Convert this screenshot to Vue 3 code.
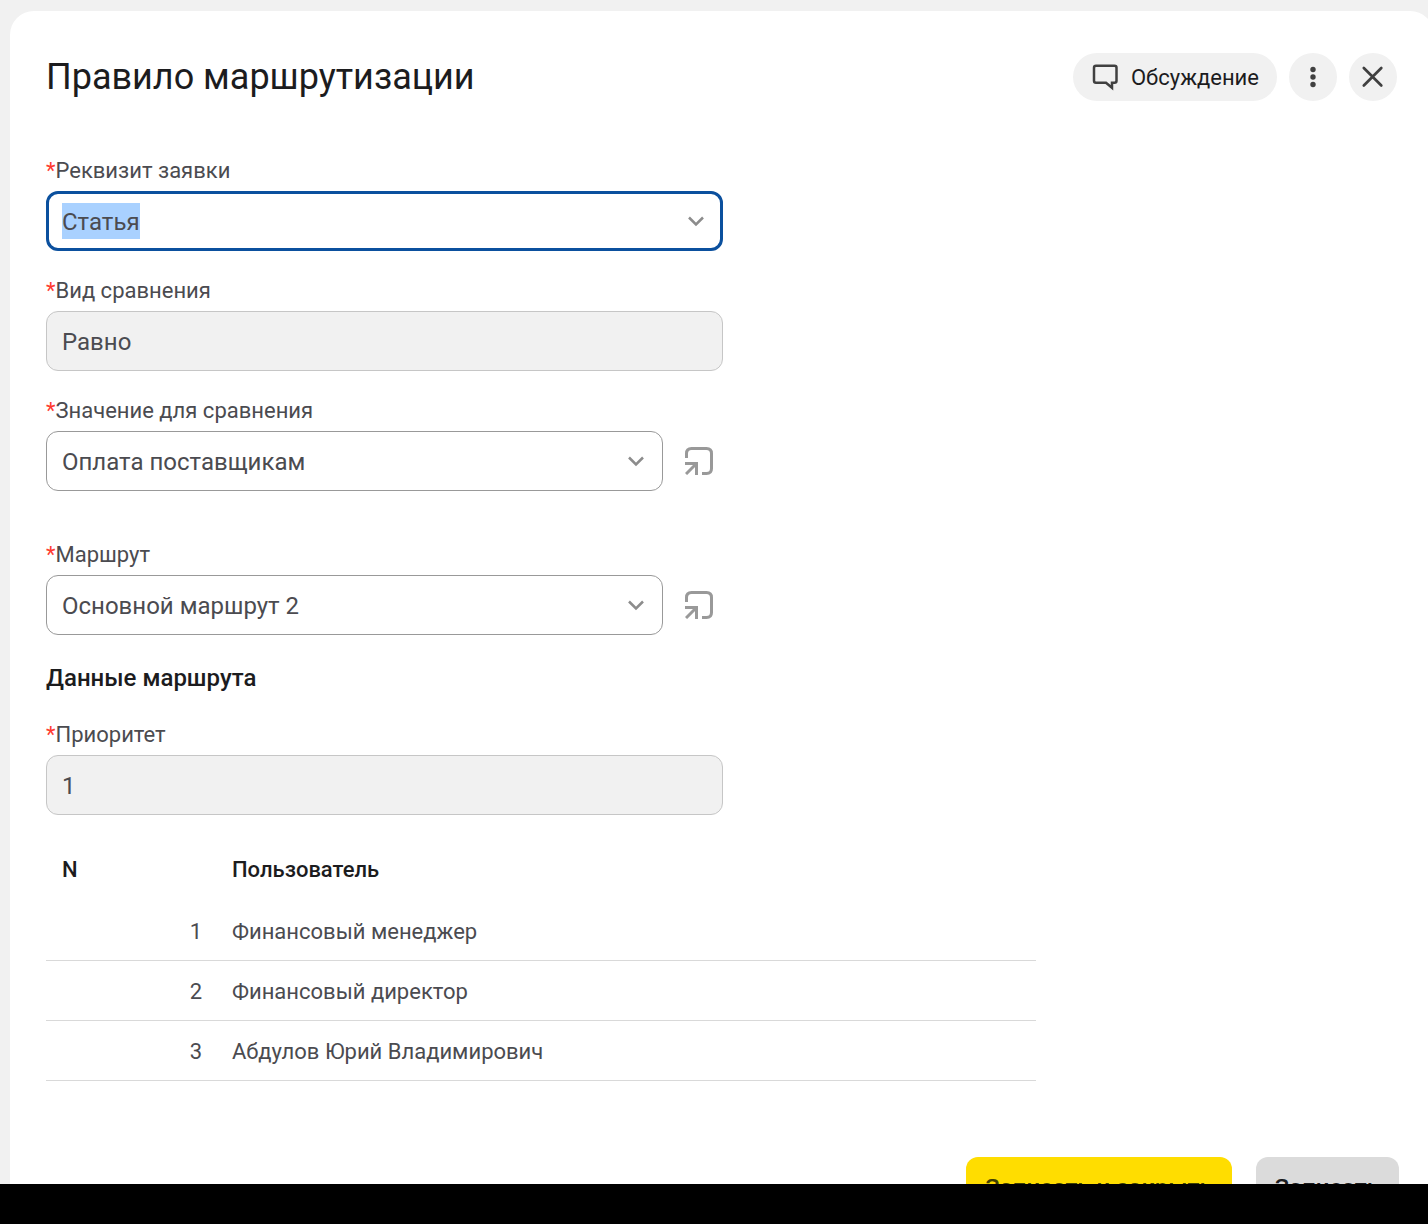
<script setup>
import { onMounted, ref } from "vue";

const attribute = ref("Статья");
const comparison = ref("Равно");
const value = ref("Оплата поставщикам");
const route = ref("Основной маршрут 2");
const priority = ref("1");

const users = [
  { id: 1, name: "Финансовый менеджер" },
  { id: 2, name: "Финансовый директор" },
  { id: 3, name: "Абдулов Юрий Владимирович" },
];

const attributeInput = ref(null);
const selected = ref(false);

const unselect = () => {
  selected.value = false;
};

// the first field is active when the form opens
onMounted(() => {
  attributeInput.value.focus();
  attributeInput.value.select();
  selected.value = true;
});
</script>

<template>
  <div class="window">
    <main class="panel">
      <header class="header">
        <h1>Правило маршрутизации</h1>
        <div class="tools">
          <button class="tool discuss">
            <svg width="28" height="28" viewBox="0 0 28 28" fill="none">
              <path
                d="M5 2.800h18.500q2 0 2 2v13q0 2-2 2h-2.500v5L15 19.800h-10q-2 0-2-2V4.800q0-2 2-2z"
                stroke="#404040"
                stroke-width="2.500"
              />
            </svg>
            <span>Обсуждение</span>
          </button>
          <button class="tool round" aria-label="Ещё">
            <svg width="24" height="24" viewBox="0 0 24 24" fill="#404040">
              <circle cx="12" cy="4.500" r="2.700" />
              <circle cx="12" cy="12" r="2.700" />
              <circle cx="12" cy="19.500" r="2.700" />
            </svg>
          </button>
          <button class="tool round" aria-label="Закрыть">
            <svg width="24" height="24" viewBox="0 0 24 24" fill="none">
              <path
                d="M2.800 3l17.500 17.500M20.300 3L2.800 20.500"
                stroke="#404040"
                stroke-width="2.700"
                stroke-linecap="round"
              />
            </svg>
          </button>
        </div>
      </header>

      <form class="form" @submit.prevent>
        <div class="field">
          <label for="attribute"><span class="star">*</span>Реквизит заявки</label>
          <div class="control combo">
            <input
              id="attribute"
              ref="attributeInput"
              v-model="attribute"
              :class="{ selected: selected }"
              type="text"
              role="combobox"
              aria-expanded="false"
              autocomplete="off"
              @keydown="unselect"
              @mousedown="unselect"
              @blur="unselect"
            />
            <svg class="chevron" width="20" height="20" viewBox="0 0 20 20">
              <path d="M3 6.500l7 7 7-7" />
            </svg>
          </div>
        </div>

        <div class="field">
          <label for="comparison"><span class="star">*</span>Вид сравнения</label>
          <input id="comparison" v-model="comparison" class="box" type="text" readonly />
        </div>

        <div class="field">
          <label for="value"><span class="star">*</span>Значение для сравнения</label>
          <div class="row">
            <div class="control">
              <select id="value" v-model="value" class="box">
                <option>Оплата поставщикам</option>
              </select>
              <svg class="chevron" width="20" height="20" viewBox="0 0 20 20">
                <path d="M3 6.500l7 7 7-7" />
              </svg>
            </div>
            <button type="button" class="open" aria-label="Открыть">
              <svg width="28" height="28" viewBox="0 0 28 28">
                <path d="M1.500 11V6.500q0-5 5-5h15q5 0 5 5v15q0 5-5 5h-4.500" />
                <path d="M0 16.500h11.500V28M11 17L1 27" />
              </svg>
            </button>
          </div>
        </div>

        <div class="field spaced">
          <label for="route"><span class="star">*</span>Маршрут</label>
          <div class="row">
            <div class="control">
              <select id="route" v-model="route" class="box">
                <option>Основной маршрут 2</option>
              </select>
              <svg class="chevron" width="20" height="20" viewBox="0 0 20 20">
                <path d="M3 6.500l7 7 7-7" />
              </svg>
            </div>
            <button type="button" class="open" aria-label="Открыть">
              <svg width="28" height="28" viewBox="0 0 28 28">
                <path d="M1.500 11V6.500q0-5 5-5h15q5 0 5 5v15q0 5-5 5h-4.500" />
                <path d="M0 16.500h11.500V28M11 17L1 27" />
              </svg>
            </button>
          </div>
        </div>

        <h2>Данные маршрута</h2>

        <div class="field">
          <label for="priority"><span class="star">*</span>Приоритет</label>
          <input id="priority" v-model="priority" class="box" type="text" readonly />
        </div>
      </form>

      <table class="users">
        <thead>
          <tr>
            <th class="number">N</th>
            <th>Пользователь</th>
          </tr>
        </thead>
        <tbody>
          <tr v-for="user in users" :key="user.id">
            <td class="number">{{ user.id }}</td>
            <td>{{ user.name }}</td>
          </tr>
        </tbody>
      </table>

      <footer class="actions">
        <button class="action primary">Записать и закрыть</button>
        <button class="action">Записать</button>
      </footer>
    </main>
    <div class="bottom-bar"></div>
  </div>
</template>

<style>
body {
  background-color: #f1f1f1;
}
</style>

<style scoped>
.window {
  height: 100vh;
  display: flex;
  flex-direction: column;
  overflow: hidden;
  color: #1c1c1e;
  font-family: Roboto, "Liberation Sans", sans-serif;
}

.window * {
  box-sizing: border-box;
}

/* the panel runs a little past the right edge of the window */
.panel {
  flex: 1;
  min-height: 0;
  overflow: hidden;
  margin: 11px -6px 0 10px;
  padding: 42px 35px 0 36px;
  background-color: #fff;
  border-radius: 24px 24px 0 0;
}

.bottom-bar {
  height: 40px;
  background-color: #000;
}

button,
input,
select {
  font-family: inherit;
}

.header {
  display: flex;
  align-items: center;
  justify-content: space-between;
  margin-bottom: 54px;
  padding-right: 2px;
}

h1 {
  margin: 0;
  font-size: 36px;
  font-weight: 400;
  line-height: 48px;
}

.tools {
  display: flex;
  gap: 12px;
}

.tool {
  display: flex;
  align-items: center;
  justify-content: center;
  height: 48px;
  padding: 0;
  border: none;
  border-radius: 24px;
  background-color: #f1f1f1;
  color: #1c1c1e;
  font-size: 22px;
}

.discuss {
  gap: 12px;
  padding: 0 18px;
}

.round {
  width: 48px;
}

.form {
  width: 50%;
}

.field {
  margin-bottom: 24px;
}

.spaced {
  margin-top: 48px;
}

label {
  display: block;
  margin-bottom: 4px;
  color: #4b4b50;
  font-size: 22px;
  line-height: 32px;
}

.star {
  color: #ff3b30;
}

.row {
  display: flex;
}

.control {
  position: relative;
  flex: 1;
}

.box,
.combo {
  display: block;
  width: 100%;
  height: 60px;
  padding: 2px 15px 0;
  border: 1px solid #999;
  border-radius: 12px;
  outline: none;
  appearance: none;
  background-color: #fff;
  color: #4b4b50;
  font-size: 24px;
  line-height: 36px;
}

input.box:read-only {
  border-color: #c6c6c6;
  background-color: #f1f1f1;
}

.combo {
  display: flex;
  align-items: center;
}

.combo:focus-within {
  padding: 0 13px;
  border: 3px solid #0b509e;
}

.combo input {
  field-sizing: content;
  min-width: 36px;
  max-width: 90%;
  height: 36px;
  padding: 1px 0 0;
  border: none;
  outline: none;
  background: none;
  color: inherit;
  font-size: inherit;
}

.combo input.selected {
  background-color: #a9d1ff;
}

.combo input::selection {
  background-color: #a9d1ff;
  color: #4b4b50;
}

.combo input.selected::selection {
  background-color: transparent;
}

.chevron {
  position: absolute;
  top: 20px;
  right: 17px;
  fill: none;
  stroke: #8c8c8c;
  stroke-width: 2.5;
  pointer-events: none;
}

.combo:focus-within .chevron {
  top: 17px;
  right: 14px;
}

.open {
  display: flex;
  align-items: center;
  justify-content: center;
  width: 60px;
  padding: 0 0 0 12px;
  border: none;
  background: none;
}

.open svg {
  fill: none;
  stroke: #999;
  stroke-width: 3;
}

h2 {
  margin: 0;
  padding: 1px 0 23px;
  font-size: 24px;
  font-weight: 500;
  line-height: 36px;
}

.users {
  width: 990px;
  max-width: 100%;
  table-layout: fixed;
  border-collapse: separate;
  border-spacing: 0;
  font-size: 22px;
  line-height: 32px;
}

th,
td {
  height: 60px;
  padding: 0 16px;
  text-align: left;
}

th {
  height: 62px;
  font-weight: 500;
}

td {
  padding-top: 2px;
  border-bottom: 1px solid #d9d9d9;
  color: #4b4b50;
}

.number {
  width: 170px;
}

td.number {
  padding-right: 14px;
  text-align: right;
}

.actions {
  display: flex;
  justify-content: flex-end;
  gap: 24px;
  margin-top: 76px;
}

.action {
  height: 60px;
  padding: 2px 19px 0;
  border: none;
  border-radius: 12px;
  background-color: #dbdbdb;
  color: #1c1c1e;
  font-size: 24px;
  font-weight: 500;
}

.primary {
  background-color: #ffdd00;
  color: #404000;
}
</style>
